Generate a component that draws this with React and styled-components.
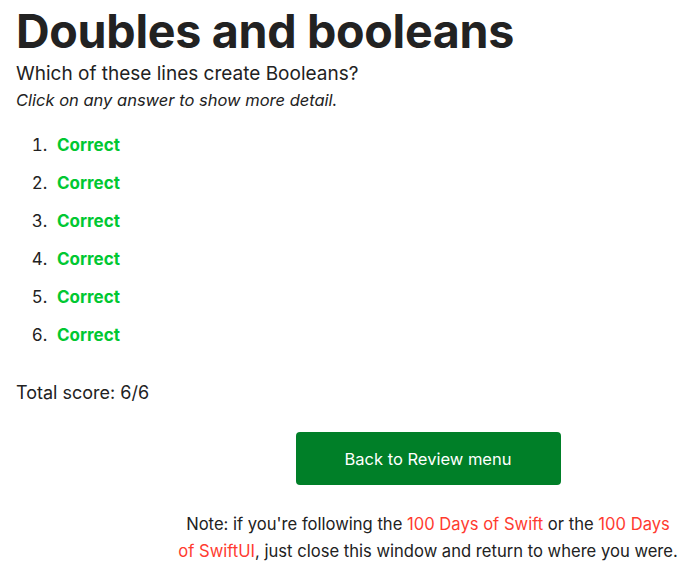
import React from "react";
import styled, { createGlobalStyle } from "styled-components";

const GlobalStyle = createGlobalStyle`
  body {
    margin: 0;
    background: #fff;
    color: #222;
    font-family: Inter, "Noto Sans", sans-serif;
  }
`;

const answers = [1, 2, 3, 4, 5, 6];

const App = () => {
  return (
    <Page>
      <GlobalStyle />
      <Title>Doubles and booleans</Title>
      <Question>Which of these lines create Booleans?</Question>
      <Hint>Click on any answer to show more detail.</Hint>
      <AnswerList>
        {answers.map((n) => (
          <AnswerItem key={n}>
            <Result $correct>Correct</Result>
          </AnswerItem>
        ))}
      </AnswerList>
      <Score>Total score: 6/6</Score>
      <Footer>
        <BackButton>Back to Review menu</BackButton>
        <Note>
          Note: if you're following the <NoteLink href="#">100 Days of Swift</NoteLink> or the{" "}
          <NoteLink href="#">100 Days of SwiftUI</NoteLink>, just close this window and return to
          where you were.
        </Note>
      </Footer>
    </Page>
  );
};

const Page = styled.main`
  padding: 0 16px;
`;

const Title = styled.h1`
  margin: 0;
  padding-top: 3px;
  font-size: 46.6px;
  font-weight: 700;
  line-height: 56px;
  letter-spacing: -0.3px;
  color: #222;
`;

const Question = styled.p`
  margin: 2px 0 0;
  font-size: 19px;
  line-height: 26px;
`;

const Hint = styled.p`
  margin: 0;
  font-size: 16.5px;
  font-style: italic;
  line-height: 26px;
`;

const AnswerList = styled.ol`
  margin: 19px 0 0;
  padding-left: 36px;
  font-size: 17px;
`;

const AnswerItem = styled.li`
  line-height: 26px;
  padding-left: 5px;
  & + & {
    margin-top: 12px;
  }
`;

const Result = styled.span`
  font-weight: 700;
  color: ${(p) => (p.$correct ? "#00c832" : "#ff3b30")};
`;

const Score = styled.p`
  margin: 32px 0 0;
  font-size: 18px;
  line-height: 26px;
`;

const Footer = styled.div`
  width: 512px;
  margin: 26px -8px 0 auto;
  display: flex;
  flex-direction: column;
  align-items: center;
`;

const BackButton = styled.button`
  width: 265px;
  height: 53px;
  border: none;
  border-radius: 4px;
  background: #007f28;
  color: #fff;
  font-family: inherit;
  font-size: 16.5px;
  cursor: pointer;
`;

const Note = styled.p`
  max-width: 500px;
  margin: 26px 0 0;
  font-size: 16.6px;
  line-height: 27px;
  text-align: center;
`;

const NoteLink = styled.a`
  color: #ff3b30;
  text-decoration: none;
`;

export default App;
